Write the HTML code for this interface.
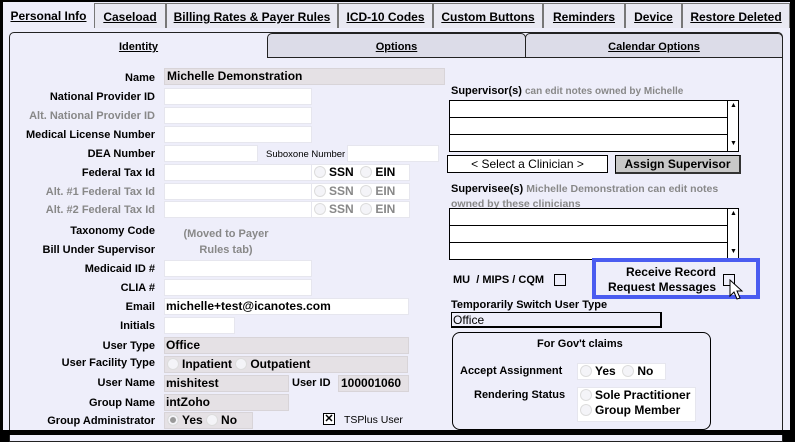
<!DOCTYPE html>
<html><head><meta charset="utf-8"><style>
*{box-sizing:border-box;margin:0;padding:0}
body{width:795px;height:435px;background:#000;position:relative;overflow:hidden;font-family:"Liberation Sans",Arial,sans-serif;font-size:11px;font-weight:bold;color:#000}
.a{position:absolute}
.lbl{position:absolute;right:640px;text-align:right;white-space:nowrap}
.g{color:#888}
.box{position:absolute;background:#fff;border:1px solid #e6e6ee}
.gb{position:absolute;background:#e5e1e5;border:1px solid #d8d4d8;font-size:12px}
.tab{position:absolute;top:3px;height:25px;background:#e9e9f2;border:1px solid #777;border-bottom:none;text-align:center;line-height:26px;text-decoration:underline;font-size:12px}
.rad{display:inline-block;width:12px;height:12px;border-radius:50%;background:#f4f4f8;border:1px solid #ddd;vertical-align:-2px;margin-right:3px}
.sub{position:absolute;top:33px;height:25px;background:#dcdce8;border:1px solid #222;text-align:center;line-height:26px;text-decoration:underline;border-radius:5px 5px 0 0}
</style></head><body>
<div class="a" style="left:3px;top:2px;width:787px;height:428px;background:#eeeefa"></div>
<div class="a" style="left:94px;top:27px;width:696px;height:1px;background:#666"></div>
<div class="tab" style="left:3px;width:91px;background:#eeeefa;border:none">Personal Info</div>
<div class="tab" style="left:94px;width:72px">Caseload</div>
<div class="tab" style="left:166px;width:172px">Billing Rates &amp; Payer Rules</div>
<div class="tab" style="left:338px;width:95px">ICD-10 Codes</div>
<div class="tab" style="left:433px;width:110px">Custom Buttons</div>
<div class="tab" style="left:543px;width:82px">Reminders</div>
<div class="tab" style="left:625px;width:57px">Device</div>
<div class="tab" style="left:682px;width:108px">Restore Deleted</div>
<div class="a" style="left:9px;top:32px;width:774px;height:410px;border:1px solid #222;border-radius:5px 5px 0 0;background:#eeeefa"></div>
<div class="sub" style="left:267px;width:259px">Options</div>
<div class="sub" style="left:525px;width:258px">Calendar Options</div>
<div class="a" style="left:267px;top:57px;width:516px;height:1px;background:#222"></div>
<div class="a" style="left:10px;top:34px;width:257px;text-align:center;line-height:26px;text-decoration:underline">Identity</div>

<div class="lbl" style="top:72px">Name</div>
<div class="gb" style="left:164px;top:68px;width:281px;height:17px;padding-left:2px;line-height:15px">Michelle Demonstration</div>
<div class="lbl" style="top:91px">National Provider ID</div><div class="box" style="left:164px;top:88px;width:148px;height:17px"></div>
<div class="lbl g" style="top:110px">Alt. National Provider ID</div><div class="box" style="left:164px;top:107px;width:148px;height:17px"></div>
<div class="lbl" style="top:129px">Medical License Number</div><div class="box" style="left:164px;top:126px;width:148px;height:17px"></div>
<div class="lbl" style="top:148px">DEA Number</div><div class="box" style="left:164px;top:145px;width:94px;height:17px"></div>
<div class="a" style="left:266px;top:149px;font-size:9.5px;font-weight:normal">Suboxone Number</div><div class="box" style="left:347px;top:145px;width:92px;height:17px"></div>
<div class="lbl" style="top:167px">Federal Tax Id</div><div class="box" style="left:164px;top:164px;width:148px;height:17px"></div>
<div class="box" style="left:311px;top:164px;width:99px;height:17px;padding-left:2px;line-height:15px;font-size:12px"><span class="rad"></span>SSN &nbsp;<span class="rad"></span>EIN</div>
<div class="lbl g" style="top:186px">Alt. #1 Federal Tax Id</div><div class="box" style="left:164px;top:183px;width:148px;height:17px"></div>
<div class="box g" style="left:311px;top:183px;width:99px;height:17px;padding-left:2px;line-height:15px;font-size:12px"><span class="rad"></span>SSN &nbsp;<span class="rad"></span>EIN</div>
<div class="lbl g" style="top:204px">Alt. #2 Federal Tax Id</div><div class="box" style="left:164px;top:201px;width:148px;height:17px"></div>
<div class="box g" style="left:311px;top:201px;width:99px;height:17px;padding-left:2px;line-height:15px;font-size:12px"><span class="rad"></span>SSN &nbsp;<span class="rad"></span>EIN</div>
<div class="lbl" style="top:225px">Taxonomy Code</div>
<div class="lbl" style="top:244px">Bill Under Supervisor</div>
<div class="a g" style="left:176px;top:226px;width:100px;text-align:center;line-height:16px">(Moved to Payer Rules tab)</div>
<div class="lbl" style="top:263px">Medicaid ID #</div><div class="box" style="left:164px;top:260px;width:148px;height:17px"></div>
<div class="lbl" style="top:282px">CLIA #</div><div class="box" style="left:164px;top:279px;width:148px;height:17px"></div>
<div class="lbl" style="top:301px">Email</div><div class="box" style="left:164px;top:298px;width:245px;height:17px;padding-left:1px;line-height:15px;font-size:12px">michelle+test@icanotes.com</div>
<div class="lbl" style="top:320px">Initials</div><div class="box" style="left:164px;top:317px;width:71px;height:17px"></div>
<div class="lbl" style="top:340px">User Type</div><div class="gb" style="left:164px;top:337px;width:245px;height:17px;padding-left:1px;line-height:15px">Office</div>
<div class="lbl" style="top:357px">User Facility Type</div><div class="gb" style="left:164px;top:356px;width:244px;height:17px;padding-left:2px;line-height:15px"><span class="rad"></span>Inpatient <span class="rad"></span>Outpatient</div>
<div class="lbl" style="top:377px">User Name</div><div class="gb" style="left:164px;top:375px;width:125px;height:17px;padding-left:1px;line-height:15px">mishitest</div>
<div class="a" style="left:292px;top:377px">User ID</div><div class="gb" style="left:338px;top:375px;width:71px;height:17px;padding-left:2px;line-height:15px">100001060</div>
<div class="lbl" style="top:397px">Group Name</div><div class="gb" style="left:164px;top:394px;width:125px;height:17px;padding-left:1px;line-height:15px">intZoho</div>
<div class="lbl" style="top:415px">Group Administrator</div><div class="gb" style="left:164px;top:412px;width:89px;height:17px;padding-left:2px;line-height:15px"><span class="rad" style="background:#999;box-shadow:inset 0 0 0 2px #f4f4f8"></span>Yes <span class="rad"></span>No</div>
<div class="a" style="left:323px;top:413px;width:12px;height:12px;border:1px solid #000;background:#fff;font-size:11px;line-height:10px;text-align:center">✕</div>
<div class="a" style="left:344px;top:414px;font-weight:normal;font-size:10.5px">TSPlus User</div>

<div class="a" style="left:451px;top:85px">Supervisor(s) <span class="g" style="font-size:10px">can edit notes owned by Michelle</span></div>
<div class="a" style="left:449px;top:100px;width:290px;height:52px;border:1px solid #000;background:#fff">
<div class="a" style="left:0;top:16px;width:277px;height:1px;background:#000"></div><div class="a" style="left:0;top:33px;width:277px;height:1px;background:#000"></div>
<div class="a" style="left:277px;top:0;width:1px;height:50px;background:#000"></div>
<div class="a" style="left:280px;top:1px;font-size:7px">▲</div><div class="a" style="left:280px;top:39px;font-size:7px">▼</div></div>
<div class="a" style="left:447px;top:155px;width:161px;height:18px;border:1px solid #000;background:#fff;text-align:center;font-weight:normal;line-height:16px;font-size:12px">&lt; Select a Clinician &gt;</div>
<div class="a" style="left:615px;top:155px;width:126px;height:19px;border:1px solid #000;border-right:2px solid #333;border-bottom:2px solid #333;background:#c8c8c8;text-align:center;line-height:16px;font-size:12px">Assign Supervisor</div>
<div class="a" style="left:451px;top:182px;width:300px;line-height:15px">Supervisee(s) <span class="g" style="font-size:10.5px">Michelle Demonstration can edit notes owned by these clinicians</span></div>
<div class="a" style="left:449px;top:208px;width:290px;height:52px;border:1px solid #000;background:#fff">
<div class="a" style="left:0;top:16px;width:277px;height:1px;background:#000"></div><div class="a" style="left:0;top:33px;width:277px;height:1px;background:#000"></div>
<div class="a" style="left:277px;top:0;width:1px;height:50px;background:#000"></div>
<div class="a" style="left:280px;top:1px;font-size:7px">▲</div><div class="a" style="left:280px;top:39px;font-size:7px">▼</div></div>
<div class="a" style="left:453px;top:274px">MU &nbsp;/ MIPS / CQM</div>
<div class="a" style="left:554px;top:274px;width:12px;height:12px;border:1px solid #000"></div>
<div class="a" style="left:592px;top:258px;width:168px;height:41px;border:4px solid #4a5cf0"></div>
<div class="a" style="left:600px;top:265px;width:116px;text-align:right;line-height:15px;font-size:12px">Receive Record Request Messages</div>
<div class="a" style="left:723px;top:274px;width:12px;height:12px;border:1px solid #000"></div>
<svg class="a" style="left:729px;top:279px" width="16" height="22" viewBox="0 0 16 22"><path d="M1 1 L1 17 L5 13 L8 20 L11 19 L8 12 L13 12 Z" fill="#fff" stroke="#000" stroke-width="1"/></svg>
<div class="a" style="left:451px;top:299px">Temporarily Switch User Type</div>
<div class="a" style="left:451px;top:312px;width:211px;height:16px;border:1px solid #000;border-right:2px solid #000;border-bottom:2px solid #000;background:#eeeefa;font-weight:normal;line-height:14px;padding-left:1px;font-size:12px">Office</div>
<div class="a" style="left:452px;top:332px;width:259px;height:98px;border:1px solid #000;border-radius:8px"></div>
<div class="a" style="left:537px;top:338px">For Gov't claims</div>
<div class="a" style="left:460px;top:365px">Accept Assignment</div>
<div class="a" style="left:577px;top:363px;width:89px;height:17px;background:#fff;border:1px solid #e6e6ee;padding-left:2px;line-height:15px;font-size:12px"><span class="rad"></span>Yes &nbsp;<span class="rad"></span>No</div>
<div class="a" style="left:474px;top:389px">Rendering Status</div>
<div class="a" style="left:577px;top:387px;width:119px;height:35px;background:#fff;border:1px solid #e6e6ee;padding-left:2px;line-height:15px;font-size:12px"><span class="rad"></span>Sole Practitioner<br><span class="rad"></span>Group Member</div>
<div class="a" style="left:782px;top:58px;width:1px;height:372px;background:#222"></div>
<div class="a" style="left:790px;top:0;width:5px;height:435px;background:#000"></div>
<div class="a" style="left:0;top:430px;width:795px;height:5px;background:#000"></div>
</body></html>
